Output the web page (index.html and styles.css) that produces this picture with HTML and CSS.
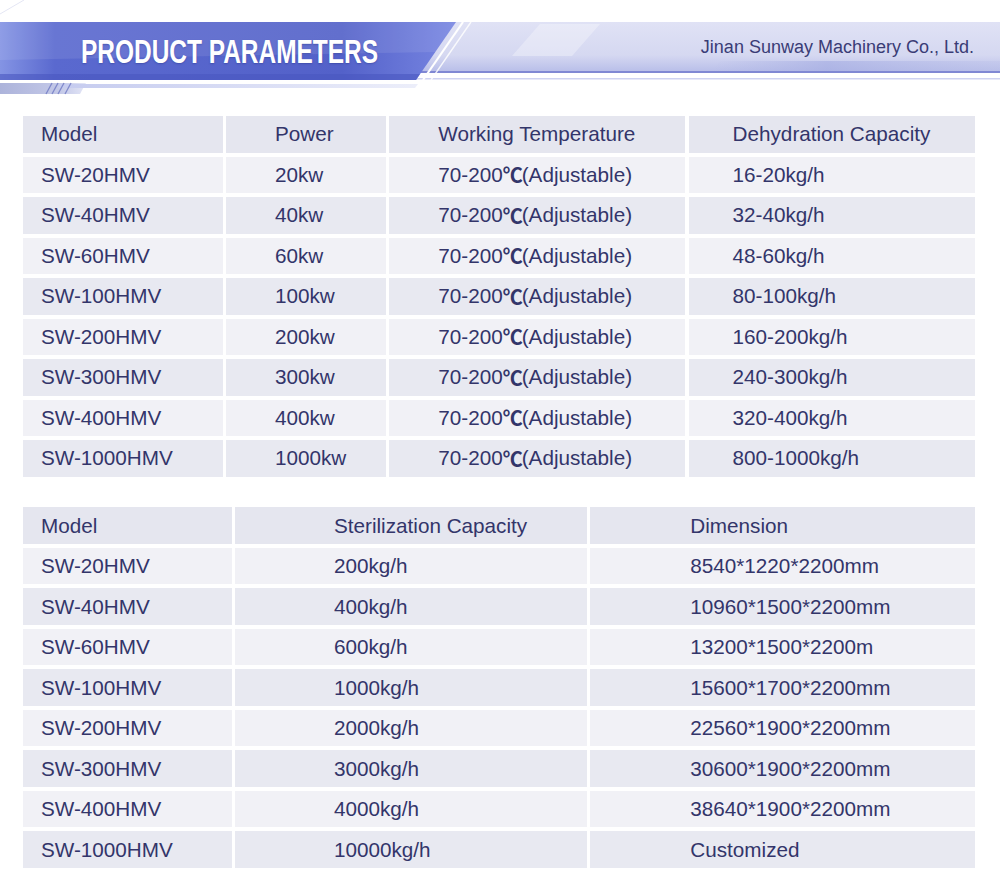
FILE: index.html
```html
<!DOCTYPE html>
<html lang="en">
<head>
<meta charset="utf-8">
<title>Product Parameters</title>
<link rel="stylesheet" href="styles.css">
</head>
<body>
<header class="banner">
  <svg class="banner-bg" width="1000" height="100" viewBox="0 0 1000 100" aria-hidden="true">
    <defs>
      <linearGradient id="dk" x1="0" y1="0" x2="1" y2="0">
        <stop offset="0" stop-color="#8494e4"/>
        <stop offset="0.12" stop-color="#5a69cf"/>
        <stop offset="0.75" stop-color="#5361c9"/>
        <stop offset="1" stop-color="#7886e2"/>
      </linearGradient>
      <linearGradient id="lt" x1="0" y1="0" x2="0" y2="1">
        <stop offset="0" stop-color="#e0e2f5"/>
        <stop offset="0.65" stop-color="#d5d8f1"/>
        <stop offset="1" stop-color="#b6bce8"/>
      </linearGradient>
      <linearGradient id="ltr" x1="0" y1="0" x2="1" y2="0">
        <stop offset="0" stop-color="#aab1e4" stop-opacity="0"/>
        <stop offset="0.4" stop-color="#a3abe2" stop-opacity="0.6"/>
        <stop offset="1" stop-color="#b9bfe9" stop-opacity="0.3"/>
      </linearGradient>
      <linearGradient id="under" x1="0" y1="0" x2="1" y2="0">
        <stop offset="0" stop-color="#c5cbef"/>
        <stop offset="1" stop-color="#eceefa"/>
      </linearGradient>
      <linearGradient id="hatch" x1="0" y1="0" x2="1" y2="0">
        <stop offset="0" stop-color="#9ea6d4"/>
        <stop offset="0.7" stop-color="#b9bfe4"/>
        <stop offset="1" stop-color="#dfe2f5"/>
      </linearGradient>
    </defs>
    <line x1="0" y1="14" x2="24" y2="0" stroke="#e4e6f4" stroke-width="1"/>
    <polygon points="430,22 1000,22 1000,73 392,73" fill="url(#lt)"/>
    <polygon points="540,24 600,24 572,56 512,56" fill="#ffffff" opacity="0.3"/>
    <polygon points="720,61 1000,61 1000,71 712,71" fill="url(#ltr)"/>
    <rect x="392" y="71" width="608" height="2" fill="#8088d3"/>
    <rect x="400" y="78" width="600" height="1.5" fill="#cfd3f2"/>
    <polygon points="0,22 456,22 416,80 0,80" fill="url(#dk)"/>
    <polygon points="0,22 456,22 436,52 0,60" fill="#ffffff" opacity="0.09"/>
    <polygon points="0,74 420,74 416,80 0,80" fill="#4a57bf" opacity="0.6"/>
    <line x1="463" y1="22" x2="423" y2="80" stroke="#ffffff" stroke-width="2.2"/>
    <line x1="471" y1="22" x2="431" y2="80" stroke="#ffffff" stroke-width="1.4" opacity="0.85"/>
    <polygon points="0,83 86,83 80,94 0,94" fill="url(#hatch)" opacity="0.85"/>
    <polygon points="60,84 418,84 415,88 58,88" fill="url(#under)"/>
    <g stroke="#6f79c4" stroke-width="1.3" opacity="0.8">
      <line x1="52" y1="83" x2="46" y2="94"/>
      <line x1="58" y1="83" x2="52" y2="94"/>
      <line x1="64" y1="83" x2="58" y2="94"/>
      <line x1="71" y1="83" x2="65" y2="94"/>
    </g>
  </svg>
  <h1 class="title">PRODUCT PARAMETERS</h1>
  <p class="company">Jinan Sunway Machinery Co., Ltd.</p>
</header>

<main class="tables">
  <div class="spec spec-a">
    <div class="cell head c1">Model</div>
    <div class="cell head c2">Power</div>
    <div class="cell head c3">Working Temperature</div>
    <div class="cell head c4">Dehydration Capacity</div>

    <div class="cell odd c1">SW-20HMV</div>
    <div class="cell odd c2">20kw</div>
    <div class="cell odd c3">70-200<span class="deg">℃</span>(Adjustable)</div>
    <div class="cell odd c4">16-20kg/h</div>

    <div class="cell even c1">SW-40HMV</div>
    <div class="cell even c2">40kw</div>
    <div class="cell even c3">70-200<span class="deg">℃</span>(Adjustable)</div>
    <div class="cell even c4">32-40kg/h</div>

    <div class="cell odd c1">SW-60HMV</div>
    <div class="cell odd c2">60kw</div>
    <div class="cell odd c3">70-200<span class="deg">℃</span>(Adjustable)</div>
    <div class="cell odd c4">48-60kg/h</div>

    <div class="cell even c1">SW-100HMV</div>
    <div class="cell even c2">100kw</div>
    <div class="cell even c3">70-200<span class="deg">℃</span>(Adjustable)</div>
    <div class="cell even c4">80-100kg/h</div>

    <div class="cell odd c1">SW-200HMV</div>
    <div class="cell odd c2">200kw</div>
    <div class="cell odd c3">70-200<span class="deg">℃</span>(Adjustable)</div>
    <div class="cell odd c4">160-200kg/h</div>

    <div class="cell even c1">SW-300HMV</div>
    <div class="cell even c2">300kw</div>
    <div class="cell even c3">70-200<span class="deg">℃</span>(Adjustable)</div>
    <div class="cell even c4">240-300kg/h</div>

    <div class="cell odd c1">SW-400HMV</div>
    <div class="cell odd c2">400kw</div>
    <div class="cell odd c3">70-200<span class="deg">℃</span>(Adjustable)</div>
    <div class="cell odd c4">320-400kg/h</div>

    <div class="cell even c1">SW-1000HMV</div>
    <div class="cell even c2">1000kw</div>
    <div class="cell even c3">70-200<span class="deg">℃</span>(Adjustable)</div>
    <div class="cell even c4">800-1000kg/h</div>
  </div>

  <div class="spec spec-b">
    <div class="cell head c1">Model</div>
    <div class="cell head d2">Sterilization Capacity</div>
    <div class="cell head d3">Dimension</div>

    <div class="cell odd c1">SW-20HMV</div>
    <div class="cell odd d2">200kg/h</div>
    <div class="cell odd d3">8540*1220*2200mm</div>

    <div class="cell even c1">SW-40HMV</div>
    <div class="cell even d2">400kg/h</div>
    <div class="cell even d3">10960*1500*2200mm</div>

    <div class="cell odd c1">SW-60HMV</div>
    <div class="cell odd d2">600kg/h</div>
    <div class="cell odd d3">13200*1500*2200m</div>

    <div class="cell even c1">SW-100HMV</div>
    <div class="cell even d2">1000kg/h</div>
    <div class="cell even d3">15600*1700*2200mm</div>

    <div class="cell odd c1">SW-200HMV</div>
    <div class="cell odd d2">2000kg/h</div>
    <div class="cell odd d3">22560*1900*2200mm</div>

    <div class="cell even c1">SW-300HMV</div>
    <div class="cell even d2">3000kg/h</div>
    <div class="cell even d3">30600*1900*2200mm</div>

    <div class="cell odd c1">SW-400HMV</div>
    <div class="cell odd d2">4000kg/h</div>
    <div class="cell odd d3">38640*1900*2200mm</div>

    <div class="cell even c1">SW-1000HMV</div>
    <div class="cell even d2">10000kg/h</div>
    <div class="cell even d3">Customized</div>
  </div>
</main>
</body>
</html>
```

FILE: styles.css
```css
* { box-sizing: border-box; }

html, body {
  margin: 0;
  padding: 0;
  background: #ffffff;
}

body {
  width: 1000px;
  font-family: "Liberation Sans", "Noto Sans CJK SC", Arial, sans-serif;
  color: #33356a;
}

.banner {
  position: relative;
  height: 100px;
  display: flex;
  align-items: flex-start;
  justify-content: space-between;
}

.banner-bg {
  position: absolute;
  top: 0;
  left: 0;
  display: block;
}

.title {
  position: relative;
  margin: 35px 0 0 81px;
  font-family: "Liberation Sans", Arial, sans-serif;
  font-weight: 700;
  font-size: 33.5px;
  line-height: 33px;
  color: #ffffff;
  white-space: nowrap;
  transform: scaleX(0.73);
  transform-origin: left center;
  text-shadow: 0 1px 2px rgba(30, 40, 120, 0.35);
}

.company {
  position: relative;
  margin: 37px 26px 0 0;
  font-size: 18px;
  line-height: 20px;
  color: #3a3c76;
  white-space: nowrap;
}

.tables {
  padding: 16px 25px 0 23px;
  display: flex;
  flex-direction: column;
  gap: 30.7px;
}

.spec {
  display: grid;
  grid-auto-rows: 36.5px;
  row-gap: 4px;
  column-gap: 3.3px;
}

.spec-a { grid-template-columns: 199.7px 160px 296px 1fr; }
.spec-b { grid-template-columns: 208.7px 352px 1fr; }

.cell {
  display: flex;
  align-items: center;
  font-size: 20.7px;
  line-height: 1;
  white-space: nowrap;
  color: #33356a;
  padding-top: 1px;
}

.deg {
  font-family: "Noto Sans CJK SC", "DejaVu Sans", sans-serif;
  font-weight: 700;
  font-size: 20px;
  margin: 0 -1px 0 0;
}

.head { background: #e5e6ef; }
.odd  { background: #f1f1f6; }
.even { background: #e8e9f1; }

.c1 { padding-left: 18px; }
.c2 { padding-left: 49px; }
.c3 { padding-left: 49px; }
.c4 { padding-left: 44px; }
.d2 { padding-left: 99px; }
.d3 { padding-left: 100px; }
```
